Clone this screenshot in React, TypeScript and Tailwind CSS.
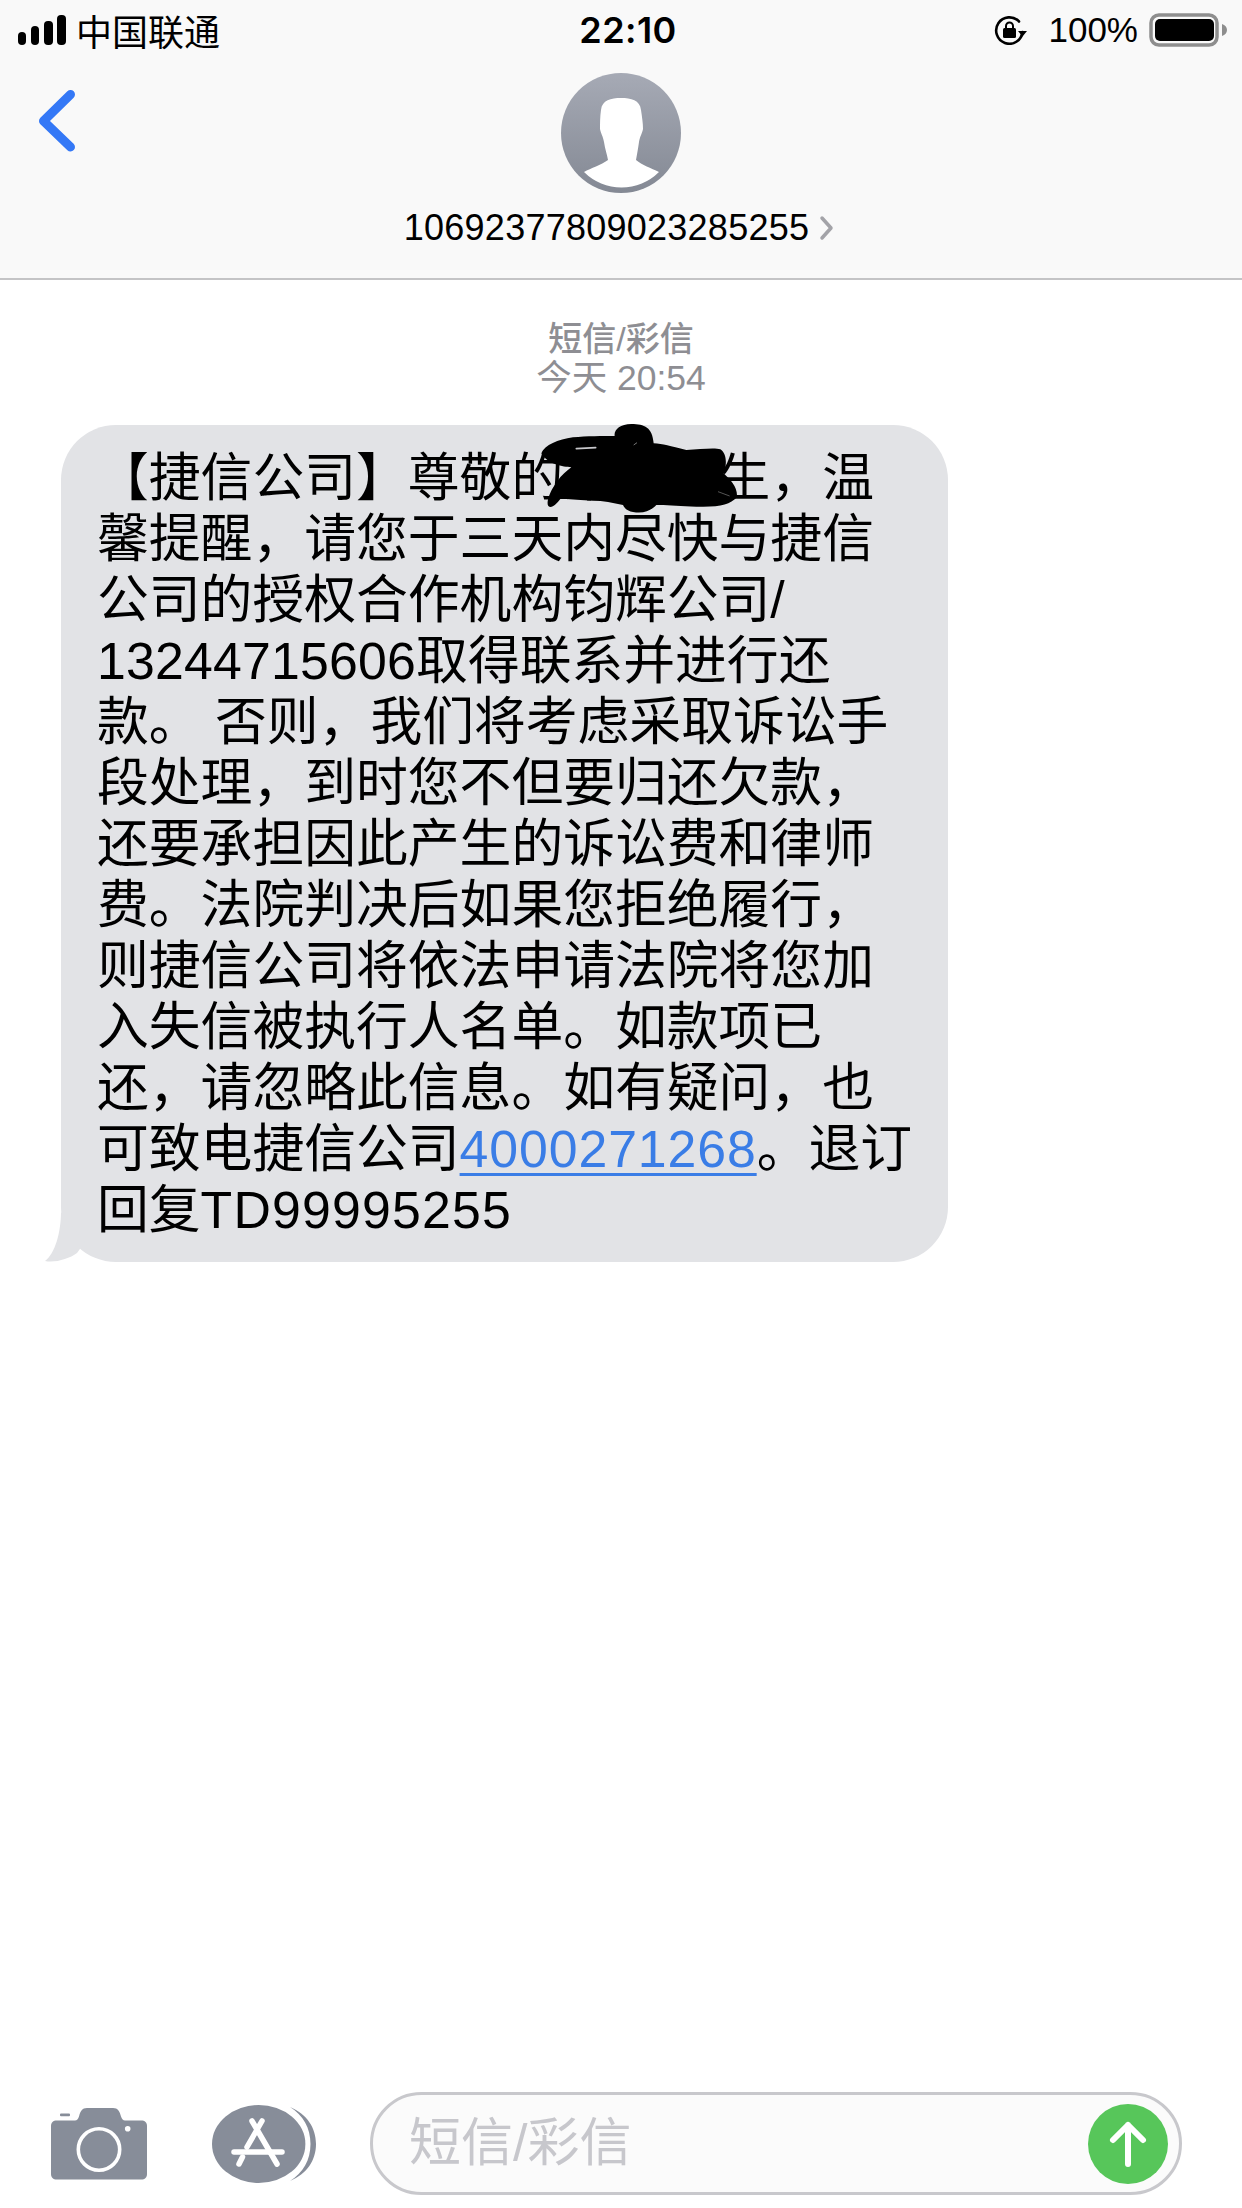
const lines = [
  "【捷信公司】尊敬的某某先生，温",
  "馨提醒，请您于三天内尽快与捷信",
  "公司的授权合作机构钧辉公司/",
];

const moreLines = [
  "款。 否则，我们将考虑采取诉讼手",
  "段处理，到时您不但要归还欠款，",
  "还要承担因此产生的诉讼费和律师",
  "费。法院判决后如果您拒绝履行，",
  "则捷信公司将依法申请法院将您加",
  "入失信被执行人名单。如款项已",
  "还，请忽略此信息。如有疑问，也",
];

function Signal() {
  return (
    <svg width="48" height="30" viewBox="0 0 48 30" fill="#000">
      <rect x="0" y="17" width="8" height="13" rx="4" />
      <rect x="13" y="11" width="8" height="19" rx="4" />
      <rect x="26" y="6" width="9" height="24" rx="4" />
      <rect x="39" y="0" width="9" height="30" rx="4" />
    </svg>
  );
}

function RotationLock() {
  return (
    <svg width="34" height="30" viewBox="0 0 34 30" fill="none">
      <path d="M28.5 17A13.2 13.2 0 1 1 25 6.5" stroke="#000" strokeWidth="2.6" strokeLinecap="round" />
      <path d="M24 16h9l-4.5 5.5z" fill="#000" />
      <rect x="9" y="13" width="13" height="10" rx="1.5" fill="#000" />
      <path d="M12 13.5v-2.5a3.5 3.5 0 0 1 7 0v2.5" stroke="#000" strokeWidth="2" />
    </svg>
  );
}

function Battery() {
  return (
    <svg width="78" height="34" viewBox="0 0 78 34">
      <rect x="2" y="2" width="66" height="30" rx="8" fill="none" stroke="#8e8e8e" strokeWidth="3.5" />
      <rect x="6" y="6" width="59" height="22" rx="5" fill="#000" />
      <path d="M73 11c3 1 5 3 5 6s-2 5-5 6z" fill="#8e8e8e" />
    </svg>
  );
}

function Avatar() {
  return (
    <svg width="120" height="120" viewBox="0 0 120 120">
      <defs>
        <linearGradient id="avatarFill" x1="0" y1="0" x2="0" y2="1">
          <stop offset="0" stopColor="#a6aab5" />
          <stop offset="1" stopColor="#848994" />
        </linearGradient>
      </defs>
      <circle cx="60" cy="60" r="60" fill="url(#avatarFill)" />
      <path
        d="M60 25C50 25 41 27 40 37C39 44 39 50 39 56C40 61 42 63 43 69C44 76 46 81 47 87C40 92 30 95 23 99A53 53 0 0 0 98 99C90 95 81 92 75 87C76 81 77 76 78 69C79 63 81 61 82 56C82 50 81 44 80 37C79 27 70 25 60 25Z"
        fill="#fff"
      />
    </svg>
  );
}

function Scribble() {
  return (
    <svg width="204" height="92" viewBox="25 36 612 276" className="absolute left-[477px] top-[-3px]">
      <path
        d="M35 130C45 105 85 88 130 82C170 78 220 78 255 78C252 60 270 42 305 42C345 42 368 52 372 100C400 102 420 108 470 120C510 118 555 113 572 118C592 130 592 165 582 190C602 210 624 230 622 262C600 285 570 292 500 290C450 288 410 284 380 285C365 300 345 312 310 306C295 304 285 296 280 285C250 278 220 272 190 272C150 270 120 266 92 267C80 282 65 298 56 288C48 278 62 240 82 215C95 195 112 182 125 172C100 170 55 165 35 130Z"
        fill="#000"
      />
      <path d="M140 116L198 113" stroke="#c8c8cc" strokeWidth="5" strokeLinecap="round" />
      <path d="M312 105L322 98" stroke="#777" strokeWidth="3" />
      <path d="M565 245L600 258" stroke="#555" strokeWidth="3" />
    </svg>
  );
}

function Camera() {
  return (
    <svg width="96" height="72" viewBox="0 0 96 72" fill="#878d99">
      <rect x="9" y="5.5" width="10" height="2.8" rx="1" />
      <path d="M6 12.5H24C26 12.5 27 11 28 8.5C29.5 3 31 0 36 0H62C67 0 68.5 3 70 8.5C71 11 72 12.5 74 12.5H90C94 12.5 96 14.5 96 18V66C96 69.5 94 71.5 90 71.5H6C2 71.5 0 69.5 0 66V18C0 14.5 2 12.5 6 12.5Z" />
      <circle cx="48" cy="41.5" r="20.7" fill="none" stroke="#fff" strokeWidth="3.6" />
      <circle cx="76.7" cy="20.7" r="2.8" fill="#fff" />
    </svg>
  );
}

function AppStore() {
  return (
    <svg width="104" height="78" viewBox="0 0 104 78">
      <ellipse cx="46.7" cy="39" rx="46.7" ry="39" fill="#878d99" />
      <path d="M78 2C95 9 104 23 104 39C104 55 95 69 78 76C91 68 98.5 55 98.5 39C98.5 23 91 10 78 2Z" fill="#878d99" />
      <g stroke="#fff" strokeWidth="5.5" strokeLinecap="round" fill="none">
        <path d="M40 16L65 59" />
        <path d="M50 16L35 42" />
        <path d="M30.5 52L27 59" />
        <path d="M22 47H70" />
      </g>
    </svg>
  );
}

export default function App() {
  return (
    <div className="w-[1242px] h-[2208px] flex flex-col bg-white text-black overflow-hidden font-['Liberation_Sans','Noto_Sans_CJK_SC',sans-serif]">
      <header className="h-[280px] shrink-0 bg-[#f9f9f9] border-b-2 border-[#c4c4c6]">
        {/* Status bar */}
        <div className="h-[60px] pl-[18px] pr-[15px] grid grid-cols-[1fr_auto_1fr] items-center">
          <div className="flex items-center gap-[10px]">
            <Signal />
            <span className="text-[36px] leading-[44px] font-['Noto_Sans_CJK_SC',sans-serif]">中国联通</span>
          </div>
          <span className="ml-[11px] text-[36px] leading-[44px] tracking-[0.4px] font-semibold font-['Inter',sans-serif]">22:10</span>
          <div className="flex items-center justify-end gap-[20px]">
            <RotationLock />
            <div className="flex items-center gap-[11px]">
              <span className="text-[35px] leading-[44px]">100%</span>
              <Battery />
            </div>
          </div>
        </div>

        {/* Contact */}
        <div className="grid grid-cols-[1fr_auto_1fr] pt-[13px]">
          <div className="pl-[36px] pt-[16px]">
            <svg width="42" height="66" viewBox="0 0 42 66" fill="none">
              <path d="M34.5 5.5L7.5 32L34.5 58" stroke="#3478f6" strokeWidth="9" strokeLinecap="round" strokeLinejoin="round" />
            </svg>
          </div>
          <Avatar />
          <div />
        </div>
        <div className="mt-[13px] flex items-center justify-center gap-[9px] pr-[3px]">
          <span className="text-[36px] leading-[44px] tracking-[0.25px]">10692377809023285255</span>
          <svg width="17" height="26" viewBox="0 0 17 26" fill="none">
            <path d="M4 3L13 13L4 23" stroke="#a3a3a8" strokeWidth="3.5" strokeLinecap="round" strokeLinejoin="round" />
          </svg>
        </div>
      </header>

      <main className="flex-1 min-h-0 pt-[40px]">
        <div className="flex flex-col items-center text-[#8e8e93] text-[34px] leading-[39px]">
          <span className="font-medium">短信/彩信</span>
          <span className="text-[35.5px]">今天 20:54</span>
        </div>

        {/* Message bubble */}
        <div className="relative ml-[61px] mt-[27px] w-[887px] rounded-[55px] bg-[#e2e3e6] pl-[36px] pt-[23px] pb-[21px] text-[51.8px] leading-[61px]">
          {lines.map((line) => (
            <div key={line} className="whitespace-pre">
              {line}
            </div>
          ))}
          <div className="whitespace-pre">
            <span className="tracking-[0.2px]">13244715606</span>取得联系并进行还
          </div>
          {moreLines.map((line) => (
            <div key={line} className="whitespace-pre">
              {line}
            </div>
          ))}
          <div className="whitespace-pre">
            可致电捷信公司<span className="text-[#3a7de6] tracking-[0.9px] underline decoration-[3px] underline-offset-[6px]">4000271268</span>。退订
          </div>
          <div className="whitespace-pre">
            回复<span className="tracking-[1.2px]">TD99995255</span>
          </div>
          <Scribble />
          <svg width="40" height="50" viewBox="0 0 40 50" className="absolute left-[-16px] bottom-0">
            <path d="M16 0C16 20 10 42 0 49C10 51 24 47 32 41L40 30L16 0Z" fill="#e2e3e6" />
          </svg>
        </div>
      </main>

      {/* Compose bar */}
      <footer className="h-[116px] shrink-0 pb-[13px] pl-[51px] pr-[60px] flex items-center">
        <Camera />
        <div className="ml-[65px]">
          <AppStore />
        </div>
        <div className="ml-[54px] flex-1 h-[103px] rounded-full border-[3px] border-[#c8c8cc] bg-[#fbfbfb] pl-[36px] pr-[11px] flex items-center justify-between">
          <span className="text-[52px] leading-[61px] text-[#c7c7cc]">短信/彩信</span>
          <div className="w-[80px] h-[80px] rounded-full bg-[#57c65a] flex items-center justify-center">
            <svg width="40" height="48" viewBox="0 0 40 48" fill="none">
              <path d="M20 44V5M5 20L20 5L35 20" stroke="#fff" strokeWidth="6" strokeLinecap="round" strokeLinejoin="round" />
            </svg>
          </div>
        </div>
      </footer>
    </div>
  );
}
